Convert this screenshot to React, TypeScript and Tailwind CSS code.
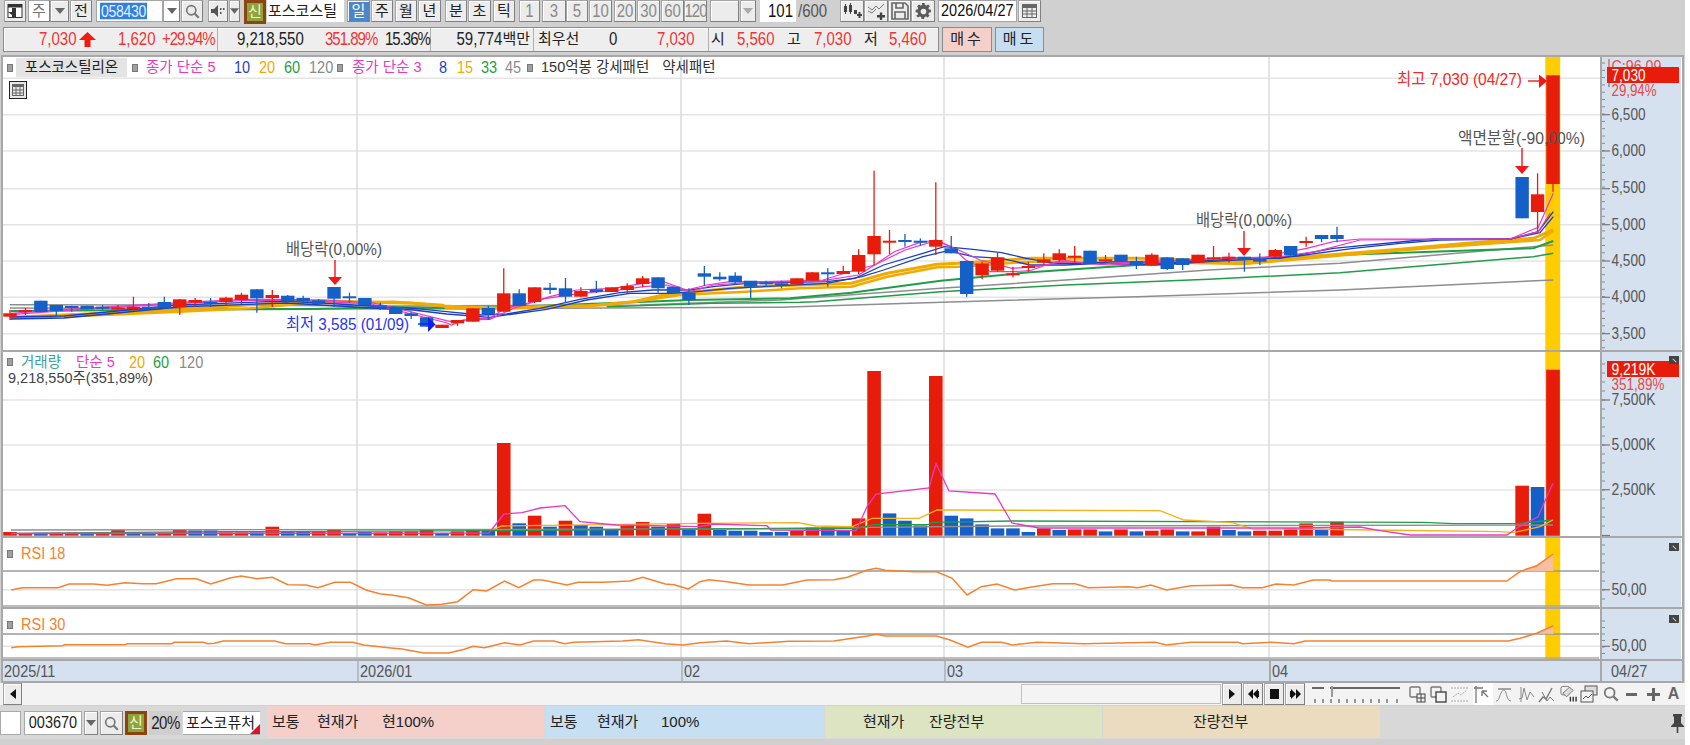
import React from "react";

type P = [number, number];
const F = (k: number, ox: number, oy: number, a: number[]): P[] => {
  const r: P[] = [];
  for (let i = 0; i < a.length; i += 2) r.push([ox + a[i] / k, oy + a[i + 1] / 3]);
  return r;
};
const z3 = (a: number[]) => F(3, 1300, 40, a);
const z4 = (a: number[]) => F(2.8, 0, 230, a);
const z5 = (a: number[]) => F(2.8, 780, 150, a);
const z12 = (a: number[]) => F(3, 380, 240, a);
const z8 = (a: number[]) => F(3, 1300, 340, a);
const z9 = (a: number[]) => F(2.24, 0, 490, a);
const z10 = (a: number[]) => F(2.24, 700, 490, a);
const pts = (p: P[]) => p.map(([x, y]) => `${x.toFixed(1)},${y.toFixed(1)}`).join(" ");

const RED = "#e81c0a";
const BLUE = "#1560c8";
const X = (i: number) => 10 + 15.43 * i;

const candles: [number, "R" | "B", number, number, number, number][] = [
  [0,"R",313.3,316.7,310,320],[1,"R",310,311.5,308,315],[2,"B",300.7,312,300.7,312],[3,"B",305,311,305,317],[4,"B",306,307.5,305.7,311.7],
  [5,"B",305.7,309.3,305.7,309.3],[6,"B",306.7,308,305,310],[7,"R",307.5,309,305,312],[8,"R",307,308.5,296.7,310.7],[9,"B",306.7,308,303,310],
  [10,"B",302,308,296.7,309],[11,"R",299.3,307.3,299,315],[12,"R",300,302.7,298,307],[13,"B",301.7,303.3,298,307],[14,"R",297.7,302,296.7,305],
  [15,"R",294.7,300,292.7,304],[16,"B",289.3,298.3,289,312.7],[17,"R",295,298,290,307],[18,"B",295.7,301.3,295,303],[19,"B",298,301.3,295.7,304],
  [20,"B",300.3,304,299,305.3],[21,"B",287,298.7,287,307],[22,"B",296.3,298.3,292.7,303],[23,"B",298,305,298,305],[24,"B",305.3,308,302.7,310],
  [25,"B",307,314,307,314],[26,"B",313.3,316,311.7,319],[27,"B",317.3,326.7,317.3,326.7],[28,"R",324.7,328,324.7,328],[29,"R",320,323.3,320,326],
  [30,"R",308.3,321.7,308.3,321.7],[31,"B",308,314,305.7,320],[32,"R",293.3,311.7,268.3,311.7],[33,"B",293.3,306,289.3,306],[34,"R",287.3,302,287.3,303],
  [35,"B",287.7,290,283,294],[36,"B",288.3,296.7,278,302.7],[37,"R",291,296.7,287.3,297.3],[38,"B",289.3,292,280.7,293],[39,"R",287.3,292,287.3,292],
  [40,"R",286,290,283.3,294],[41,"R",278.3,284,276,287.3],[42,"B",277.3,288.3,277.3,292.7],[43,"B",286.7,293.3,286.7,293.3],[44,"B",292.7,300,288.3,305],
  [45,"B",273.3,276.7,266,286],[46,"B",276.7,279.3,272.3,280.7],[47,"B",275.7,282.3,272.3,285],[48,"B",280.7,286.7,281,298],[49,"B",282.3,284,280.7,286.7],
  [50,"B",283.3,285,280.7,288.3],[51,"R",278.3,284.3,278.3,284.3],[52,"R",272.3,280.7,272.3,280.7],[53,"B",272.3,274.3,268.3,286.7],[54,"R",271,274,265.7,274],
  [55,"R",255,271.7,249.3,274],[56,"R",236,254.3,170.7,265],[57,"R",240.7,242.7,230,254],[58,"B",240,241.7,234,246.7],[59,"B",240.7,242.3,238.3,246],
  [60,"R",240,246.7,182.3,255],[61,"B",248.3,253.3,236,253.3],[62,"B",261,294,261,296.7],[63,"R",263.3,275.3,261.7,279.3],[64,"R",257.3,270.7,252.7,271.7],
  [65,"R",273.3,274.5,266.7,277.3],[66,"R",266,267.3,261.7,271.7],[67,"R",259.3,262.7,253.3,265],[68,"R",253.3,260,249.3,261.7],[69,"R",255.7,257,246,262.7],
  [70,"B",250.7,264,250.7,264],[71,"R",259.3,260.7,255,262.7],[72,"B",254.7,261.7,254.7,261.7],[73,"B",261,265,256.7,269],[74,"R",254.7,265,253.3,266],
  [75,"B",257.3,269,257.3,270],[76,"B",258.3,265,258.3,270],[77,"R",254.7,262.7,254.7,262.7],[78,"R",257.3,258.5,246,260],[79,"R",256.7,258,252.7,262.7],
  [80,"B",256.7,260,256.7,271.7],[81,"B",258.3,261.7,253.3,265],[82,"R",250,256.7,249,257],[83,"B",246,255,246,257.3],[84,"R",241,242.7,236.7,246.7],
  [85,"B",235,239,235,242.3],[86,"B",235,239,226.7,242.3],[98,"B",177,218.3,177,218.3],[99,"R",194.3,212,173.3,231.7],[100,"R",75.3,184,75.3,191.7],
];

const vols: [number, "R" | "B", number][] = ([
  ["R",3.7],["R",2],["B",3],["R",3],["R",3],["B",3],["R",3],["R",5.7],["B",3.3],["B",2.3],["R",3],["R",5.7],["B",5.3],["B",5.3],["R",3.3],["R",3.3],["B",3.3],["R",9],["B",4.7],["B",4.7],
  ["R",4.7],["R",6.3],["B",2.7],["B",3.7],["R",3.3],["R",4.3],["R",4.3],["R",6.7],["B",2.7],["R",4.3],["R",6.3],["B",4.7],["R",92.7],["B",12.4],["R",20],["B",9],["R",15],["B",10.7],["B",9],["B",6.3],
  ["R",9.7],["R",13.7],["B",9],["R",11.7],["B",5.7],["R",22],["B",5.7],["B",5],["B",5],["B",3.7],["B",3.7],["R",5],["R",8.3],["B",9],["B",5],["R",17.3],["R",164.7],["B",22.3],["B",15],["B",10.3],
  ["R",159.7],["B",20],["B",17.3],["B",11.3],["B",7.3],["B",7.3],["B",3.7],["R",7.3],["B",5.7],["R",6.3],["R",6.3],["B",4.3],["R",6.3],["B",4.3],["R",5],["R",6.3],["B",4.3],["R",4.3],["R",9],["B",5.7],
  ["B",4.3],["R",5],["R",5],["R",7.3],["R",12.3],["B",5.7],["R",14],
] as ["R" | "B", number][]).map((v, i) => [i, v[0], v[1]] as [number, "R" | "B", number]).concat([[98,"R",50],[99,"B",48.7],[100,"R",166]]);

const PINK = "#e53ac6";
const NAVY = "#1b3fc0";
const ORANGE = "#f0aa00";
const GREEN = "#1f9e48";
const GRAY = "#8e8e8e";

const maLines: { c: string; w: number; p: P[] }[] = [
  { c: GRAY, w: 1.5, p: [[10,304.7],[180,305],[400,306],[640,305],...z5([0,450,450,415,800,390,1200,360,1568,340]),...z3([700,620,760,615])] },
  { c: GRAY, w: 1.5, p: [[10,308],[400,309],[606,308],...z5([0,472,500,455,1000,440,1568,420]),...z3([760,720])] },
  { c: GREEN, w: 2, p: [...z4([30,243,700,238,870,237,1100,232,1300,235,1568,225]),...z12([680,190,930,180,1230,175]),...z5([200,428,450,392,700,367,1000,345,1200,337,1560,315]),...z3([700,625,760,603])] },
  { c: GREEN, w: 1.5, p: [...z12([680,200,1000,190,1260,187]),...z5([100,455,450,425,800,405,1200,388,1568,368]),...z3([700,650,760,640])] },
  { c: ORANGE, w: 3, p: [...z4([30,262,290,250,500,240,690,225,900,212,1100,218]),...z12([100,190,190,198,330,205,520,198,620,198,760,185,850,165,1000,150,1100,140,1260,135]),...z5([200,400,300,370,440,343,500,340,700,325,1000,325,1300,335]),...z3([150,640,300,628,500,610,700,595,760,570])] },
  { c: ORANGE, w: 2.5, p: [...z4([30,264,290,255,500,245,700,235,860,220,1100,215,1240,225]),...z12([200,205,400,205,680,195,800,180,900,165,1000,160,1100,155,1260,145]),...z5([200,410,300,380,440,352,500,350,700,335,1000,335,1300,342]),...z3([250,635,440,620,720,600,760,572])] },
  { c: NAVY, w: 1.3, p: [[10,317],[64,316],[107,312],[178,305],[286,301],[321,303],[371,306],...z12([100,205,200,215,300,225,380,222,480,205,600,178,720,158,820,150,930,150,1000,140,1100,130]),...z5([130,395,210,385,290,345,400,310,460,290,540,298,620,308,690,325,770,340,850,340,950,335,1050,340,1150,335,1300,325,1400,325]),...z3([100,625,330,603,400,597,630,597,715,575,760,515])] },
  { c: NAVY, w: 1.3, p: [[10,319],[64,318],[107,314],[178,307],[286,303],[321,305],[371,308],...z12([100,210,200,222,330,232,400,222,500,208,620,180,750,160,870,160,950,155,1050,145]),...z5([130,400,230,380,290,360,400,320,470,302,540,320,620,325,700,345,800,345,900,340,1050,345,1200,335,1320,328,1450,318]),...z3([160,625,300,610,420,600,630,597,720,578,760,530])] },
  { c: PINK, w: 1.2, p: [...z4([30,250,230,235,550,215,700,208,800,208,900,210,1040,218,1130,240,1250,272]),...z12([215,245,300,235,330,235,375,205,440,190,510,170,590,150,700,145,790,130,850,125,920,150,980,135,1050,125,1150,125]),...z5([120,390,210,360,265,345,320,305,390,278,437,270,480,290,520,330,590,365,650,365,700,362,745,345,790,330,860,340,920,345,1000,340,1100,335,1250,322,1350,325,1400,310,1475,295]),...z3([100,605,180,597,630,597,715,562,760,460])] },
  { c: PINK, w: 1.2, p: [...z4([30,254,230,238,550,218,700,211,800,211,900,214,1040,222,1130,246,1250,278]),...z12([215,255,250,240,330,238,400,205,500,175,600,160,720,150,790,140,860,135,930,155,1000,135,1100,128]),...z5([120,392,220,375,265,345,350,300,437,272,500,300,560,330,650,355,720,350,790,335,900,342,1000,335,1250,325,1400,320,1500,305]),...z3([180,600,630,597,715,575,750,520])] },
];

const rsi18: P[] = [
  ...z9([25,300,50,293,130,293,155,282,210,282,240,286,280,278,320,281,350,281,395,266,440,266,472,282,515,264,540,258,575,266,610,262,645,284,685,285,712,293,750,277,785,277,820,300,850,311,880,316,915,323,955,345,990,343,1025,335,1060,299,1090,303,1130,273,1162,293,1195,270,1215,270,1270,285,1295,277,1350,277,1410,273,1440,262,1490,282,1510,284,1542,297]),
  ...z10([0,275,20,269,60,275,110,285,185,285,240,270,300,269,330,262,375,240,395,235,415,241,480,245,530,245,565,265,598,315,630,290,665,282,705,300,740,292,790,281,840,281,870,293,960,290,980,293,1010,285,1045,300,1100,287,1190,285,1215,293,1260,293,1290,282,1330,285]),
  ...z8([40,720,90,720,95,723,620,723,660,695,680,687,710,677,760,642]),
];
const rsi30: P[] = [
  ...z9([25,473,40,470,140,467,145,464,280,464,285,461,385,461,390,457,455,457,465,461,480,460,500,453,615,453,640,461,695,461,705,465,740,457,790,457,815,465,870,473,900,477,950,489,1005,489,1040,478,1060,469,1085,473,1130,458,1165,465,1195,453,1240,453,1265,461,1285,457,1395,453,1430,449,1490,461,1530,465]),
  ...z10([0,458,60,453,110,461,200,454,300,453,375,438,395,433,415,438,530,438,560,450,600,472,630,457,675,457,700,465,755,457,860,461,1020,457,1045,465,1100,457,1205,457,1215,461,1280,457,1330,461]),
  ...z8([15,903,625,903,660,895,710,880,760,857]),
];

const volMA: { c: string; p: P[] }[] = [
  { c: GRAY, p: [[11,530],[700,529],[1012,526],[1553,525]] },
  { c: GREEN, p: [[13,533.3],[223,531.7],[491,530.7],[700,529],[856,528.5],[874,524.7],[928,524.7],[932,522.3],[1012,521],[1423,522.3],[1454,523.7],[1517,523.7],[1553,520]] },
  { c: "#f2b21c", p: [[491,530],[502,526],[700,523.3],[798,522.7],[816,526],[852,526.7],[872,518.3],[919,518.3],[937,510],[1160,510.7],[1184,520],[1231,522.3],[1254,529.3],[1300,529],[1373,530],[1500,531.7],[1513,532.7],[1540,526.7],[1553,520]] },
  { c: PINK, p: [[11,533.5],[489,533],[504,514],[522,512.7],[540,508],[565,505.7],[580,521.7],[616,525],[700,526.7],[713,524],[767,525.7],[771,530],[856,530.7],[867,506.7],[876,494],[929,488],[936,463.5],[949,491],[995,494],[1012,523],[1039,528],[1300,528],[1360,527],[1380,530.7],[1410,535],[1507,535],[1517,528],[1538,516.7],[1553,483]] },
];

const vGrid = [357, 681, 944, 1269];

const Backdrop = ({ top, h, lines }: { top: number; h: number; lines: number[] }) => (
  <>
    {lines.map((y) => <line key={y} x1={3} x2={1600} y1={y} y2={y} stroke="#e4e4e4" strokeWidth={1.6} />)}
    {vGrid.map((x) => <line key={x} x1={x} x2={x} y1={top} y2={top + h} stroke="#dcdcdc" strokeWidth={1.6} />)}
    <rect x={1545.3} y={top} width={14.9} height={h} fill="#ffcc00" />
  </>
);

const Arrow = ({ x, y1, y2, c }: { x: number; y1: number; y2: number; c: string }) => (
  <g>
    <line x1={x} x2={x} y1={y1} y2={y2} stroke={c} strokeWidth={1.4} />
    <polygon points={`${x - 7},${y2} ${x + 7},${y2} ${x},${y2 + 8}`} fill={c} />
  </g>
);

// chart label: taller glyphs pressed to the width the reference shows
const T = ({ x, y, w, c, fs = 16.5, children }: { x: number; y: number; w: number; c: string; fs?: number; children: React.ReactNode }) => (
  <text x={x} y={y} fontSize={fs} fill={c} textLength={w} lengthAdjust="spacingAndGlyphs">{children}</text>
);

const Sq = () => <span className="block w-[6px] h-[8px] bg-[#a0a0a0] border border-[#777]" />;

const CloseMark = ({ className }: { className: string }) => (
  <div className={`absolute left-[67px] w-[10px] h-[8px] bg-[#444] flex items-center justify-center ${className}`}>
    <span className="block w-[5px] h-[1px] bg-[#ddd] rotate-45" />
  </div>
);

const AxisTicks = ({ major, minor }: { major: number[]; minor: number[] }) => (
  <>
    {minor.map((y) => <line key={y} x1={1602} x2={1605} y1={y} y2={y} stroke="#8a8a8a" strokeWidth={1} />)}
    {major.map((y) => <line key={y} x1={1602} x2={1610} y1={y} y2={y} stroke="#777" strokeWidth={1.2} />)}
  </>
);

const Axis = ({ top, h, children }: { top: number; h: number; children: React.ReactNode }) => (
  <svg className="block absolute inset-0" width={79} height={h} viewBox={`1602 ${top} 79 ${h}`}>{children}</svg>
);

const range = (a: number, b: number, s: number) => {
  const r: number[] = [];
  for (let v = a; v < b; v += s) r.push(v);
  return r;
};

const ALabel = ({ y, w = 34, children, c = "#555" }: { y: number; w?: number; children: React.ReactNode; c?: string }) => (
  <T x={1611.5} y={y + 6} w={w} c={c} fs={17}>{children}</T>
);

const PriceChart = () => {
  const top = 57, h = 293;
  return (
    <svg className="block" width={1597} height={h} viewBox={`3 ${top} 1597 ${h}`}>
      <Backdrop top={top} h={h} lines={[78.3, 114.7, 151, 188.7, 224.7, 261, 297.3, 333.7]} />
      {maLines.map((l, i) => <polyline key={i} points={pts(l.p)} fill="none" stroke={l.c} strokeWidth={l.w} />)}
      {candles.map(([i, c, bt, bb, wt, wb]) => {
        const col = c === "R" ? RED : BLUE;
        return (
          <g key={i}>
            <line x1={X(i)} x2={X(i)} y1={wt} y2={wb} stroke={col} strokeWidth={1.3} />
            <rect x={X(i) - 6.7} y={bt} width={13.4} height={Math.max(bb - bt, 2)} fill={col} />
          </g>
        );
      })}
      <T x={286} y={255} w={96} c="#555">배당락(0,00%)</T>
      <Arrow x={335} y1={260} y2={277} c="#f01818" />
      <T x={286} y={330} w={123} c="#2a35f0">최저 3,585 (01/09)</T>
      <line x1={418} x2={428} y1={324} y2={324} stroke="#1020f0" strokeWidth={1.4} />
      <polygon points="428,317 435.5,324.5 428,332" fill="#1020f0" />
      <T x={1196} y={226} w={96} c="#555">배당락(0,00%)</T>
      <Arrow x={1244} y1={231} y2={248} c="#f01818" />
      <T x={1397} y={85} w={125} c="#f02a2a">최고 7,030 (04/27)</T>
      <line x1={1528} x2={1540} y1={81} y2={81} stroke="#f01818" strokeWidth={1.4} />
      <polygon points="1539,74.5 1547,81 1539,88" fill="#f01818" />
      <T x={1458} y={144} w={127} c="#555">액면분할(-90,00%)</T>
      <Arrow x={1522} y1={148} y2={166} c="#f01818" />
    </svg>
  );
};

const VolumeChart = () => {
  const top = 352, h = 184;
  return (
    <svg className="block" width={1597} height={h} viewBox={`3 ${top} 1597 ${h}`}>
      <Backdrop top={top} h={h} lines={[400, 445, 490]} />
      {vols.map(([i, c, v]) => <rect key={i} x={X(i) - 6.8} y={535.7 - v} width={13.6} height={v} fill={c === "R" ? RED : BLUE} />)}
      {volMA.map((l, i) => <polyline key={i} points={pts(l.p)} fill="none" stroke={l.c} strokeWidth={1.3} />)}
    </svg>
  );
};

const RsiChart = ({ top, h, hi, mid, line, fill }: { top: number; h: number; hi: number; mid: number; line: P[]; fill: P[] }) => (
  <svg className="block" width={1597} height={h} viewBox={`3 ${top} 1597 ${h}`}>
    <Backdrop top={top} h={h} lines={[mid]} />
    <line x1={3} x2={1599} y1={hi} y2={hi} stroke="#9a9a9a" strokeWidth={1.6} />
    <line x1={3} x2={1599} y1={top + h - 1} y2={top + h - 1} stroke="#a8a8a8" strokeWidth={1.4} />
    <polygon points={pts(fill)} fill="#f6bf9f" />
    <polyline points={pts(line)} fill="none" stroke="#f58230" strokeWidth={1.5} />
  </svg>
);

const Btn = ({ className = "", bg = "bg-[#ececec]", fg = "text-[#222]", h = "h-[22px]", children }: { className?: string; bg?: string; fg?: string; h?: string; children?: React.ReactNode }) => (
  <div className={`flex items-center justify-center shrink-0 border border-[#a4a4a4] border-b-[#808080] border-r-[#808080] shadow-[inset_1px_1px_0_#fff] text-[15px] overflow-hidden whitespace-nowrap ${h} ${bg} ${fg} ${className}`}>{children}</div>
);

const Down = ({ c = "#666" }: { c?: string }) => (
  <svg width="10" height="6" viewBox="0 0 10 6"><polygon points="0,0 10,0 5,6" fill={c} /></svg>
);

const Mag = ({ s = 18 }: { s?: number }) => (
  <svg width={s} height={s} viewBox="0 0 18 18" fill="none" stroke="#777" strokeWidth="2"><circle cx="7.5" cy="7.5" r="5.5" /><line x1="11.5" y1="11.5" x2="16.5" y2="16.5" strokeWidth="2.6" /></svg>
);

const Shin = ({ className = "" }: { className?: string }) => (
  <div className={`flex items-center justify-center shrink-0 w-[22px] h-[24px] border-[3px] border-[#8a4510] bg-[#8ea33c] text-[15px] text-[#eef5c8] ${className}`}>신</div>
);

const Num = ({ children }: { children: React.ReactNode }) => <span className="block scale-y-[1.18]">{children}</span>;

const GRAYFG = "text-[#8a8a8a]";

const TopBar = () => (
  <div className="flex h-[24px] pl-[4px] items-start shrink-0">
    <Btn className="w-[22px]">
      <svg width="16" height="14" viewBox="0 0 16 14"><rect x="1" y="0.5" width="14" height="13" fill="#fff" stroke="#333" /><rect x="1" y="0.5" width="14" height="3" fill="#333" /><rect x="5" y="4" width="4" height="9" fill="#333" /><polygon points="5,8 1,8 5,11" fill="#333" /></svg>
    </Btn>
    <Btn className="ml-[2px] w-[22px]" bg="bg-white" fg="text-[#777]">주</Btn>
    <Btn className="w-[19px]"><Down /></Btn>
    <Btn className="ml-[1px] w-[22px]">전</Btn>
    <div className="ml-[4px] w-[67px] h-[22px] shrink-0 bg-white border border-[#a4a4a4] flex items-center pl-[3px] text-[14px]">
      <span className="block scale-y-[1.18] bg-[#2f80e0] text-[#e6f2ff] px-[1px] leading-[14px] tracking-[-0.3px]">058430</span>
    </div>
    <Btn className="w-[17px]" bg="bg-white"><Down /></Btn>
    <Btn className="ml-[1px] w-[22px]"><Mag s={15} /></Btn>
    <Btn className="ml-[5px] w-[20px]">
      <svg width="14" height="14" viewBox="0 0 14 14" fill="#555"><polygon points="0,5 3,5 7,1 7,13 3,9 0,9" /><rect x="9" y="4" width="1.5" height="2" /><rect x="12" y="4" width="1.5" height="2" /><rect x="9" y="8" width="1.5" height="2" /></svg>
    </Btn>
    <Btn className="ml-[1px] w-[11px]"><Down /></Btn>
    <Shin className="ml-[4px]" />
    <div className="ml-[1px] w-[77px] h-[22px] shrink-0 bg-white flex items-center pl-[1px] text-[15px] text-[#222] overflow-hidden whitespace-nowrap">포스코스틸</div>
    <Btn className="ml-[3px] w-[23px]" bg="bg-[#4a86c8]" fg="text-white">일</Btn>
    <Btn className="ml-[1px] w-[22px]">주</Btn>
    <Btn className="ml-[2px] w-[22px]">월</Btn>
    <Btn className="ml-[1px] w-[23px]">년</Btn>
    <Btn className="ml-[4px] w-[22px]">분</Btn>
    <Btn className="ml-[1px] w-[23px]">초</Btn>
    <Btn className="ml-[2px] w-[22px]">틱</Btn>
    <Btn className="ml-[4px] w-[21px]" fg={GRAYFG}><Num>1</Num></Btn>
    <Btn className="ml-[2px] w-[24px]" fg={GRAYFG}><Num>3</Num></Btn>
    <Btn className="w-[22px]" fg={GRAYFG}><Num>5</Num></Btn>
    <Btn className="ml-[1px] w-[23px]" fg={GRAYFG}><Num>10</Num></Btn>
    <Btn className="ml-[2px] w-[22px]" fg={GRAYFG}><Num>20</Num></Btn>
    <Btn className="ml-[1px] w-[23px]" fg={GRAYFG}><Num>30</Num></Btn>
    <Btn className="ml-[1px] w-[23px]" fg={GRAYFG}><Num>60</Num></Btn>
    <Btn className="w-[23px] tracking-[-1px]" fg={GRAYFG}><Num>120</Num></Btn>
    <Btn className="ml-[3px] w-[29px]" />
    <Btn className="ml-[1px] w-[16px]"><Down c="#aaa" /></Btn>
    <div className="ml-[4px] w-[36px] h-[22px] shrink-0 bg-white flex items-center justify-end pr-[3px] text-[15px] text-[#111]"><Num>101</Num></div>
    <div className="ml-[2px] w-[30px] h-[22px] shrink-0 flex items-center text-[15px] text-[#555]"><Num>/600</Num></div>
    <Btn className="ml-[12px] w-[24px]">
      <svg width="19" height="17" viewBox="0 0 19 17" fill="#444"><rect x="1" y="3" width="3" height="6" /><line x1="2.5" y1="1" x2="2.5" y2="11" stroke="#444" /><rect x="6" y="2" width="3" height="7" /><line x1="7.5" y1="0" x2="7.5" y2="11" stroke="#444" /><rect x="11" y="7" width="3" height="4" fill="#444" /><path d="M14 11h5v2h-5zM15.5 9h2v6h-2z" /></svg>
    </Btn>
    <Btn className="w-[24px]">
      <svg width="19" height="17" viewBox="0 0 19 17" fill="none" stroke="#777"><path d="M1 4l4 3 4-4 3 3 5-5" /><path d="M1 8l4 2 4-4" /><path d="M10 12h8v2.4h-8zM12.8 9.5h2.4v8h-2.4z" fill="#444" stroke="none" /></svg>
    </Btn>
    <Btn className="w-[23px]">
      <svg width="18" height="18" viewBox="0 0 18 18" fill="none" stroke="#666" strokeWidth="1.6"><path d="M1 1h13l3 3v13H1z" /><path d="M5 1v5h7V1M4 17v-7h10v7" /></svg>
    </Btn>
    <Btn className="w-[24px]">
      <svg width="17" height="17" viewBox="0 0 24 24" fill="#5a5a5a"><path d="M10 1h4l.6 3 2.4 1 2.6-1.7 2.8 2.8L20 8.7l1 2.4 3 .6v4l-3 .3-1 2.5 1.7 2.6-2.8 2.8-2.6-1.8-2.4 1-.6 3h-4l-.6-3-2.4-1-2.6 1.8-2.8-2.8L4 18.5 3 16l-3-.3v-4l3-.6 1-2.4-1.7-2.6 2.8-2.8L7.7 5l2.4-1z" transform="scale(.9) translate(1 -1)" /><circle cx="12" cy="12" r="4" fill="#ececec" /></svg>
    </Btn>
    <div className="ml-[3px] w-[79px] h-[22px] shrink-0 bg-white border border-[#a4a4a4] flex items-center pl-[2px] text-[14.5px] text-[#111] overflow-hidden whitespace-nowrap"><Num>2026/04/27</Num></div>
    <Btn className="ml-[1px] w-[23px]">
      <svg width="15" height="14" viewBox="0 0 15 14" fill="none" stroke="#666"><rect x="0.5" y="0.5" width="14" height="13" /><rect x="0.5" y="0.5" width="14" height="3" fill="#666" /><path d="M5 4v9M10 4v9M1 7h13M1 10h13" /></svg>
    </Btn>
  </div>
);

const Red = ({ className = "", children }: { className?: string; children: React.ReactNode }) => (
  <span className={`block scale-y-[1.18] text-[#f03434] whitespace-nowrap ${className}`}>{children}</span>
);

const InfoBar = () => (
  <div className="flex h-[25px] mt-[3px] ml-[3px] shrink-0">
    <div className="flex w-[936px] border border-[#8c8c8c] bg-[#eeeeee] text-[15px] text-[#222] shadow-[inset_1px_1px_0_#fff]">
      <div className="flex items-center w-[214px] border-r border-[#b0b0b0] pl-[35px]">
        <Red className="w-[38px]">7,030</Red>
        <svg className="ml-[2px] shrink-0" width="17" height="15" viewBox="0 0 17 15"><polygon points="8.5,0 17,8 11.5,8 11.5,15 5.5,15 5.5,8 0,8" fill="#f01c10" /></svg>
        <Red className="ml-[22px] w-[37px]">1,620</Red>
        <Red className="ml-[7px] tracking-[-1px]">+29.94%</Red>
      </div>
      <div className="flex items-center w-[213px] border-r border-[#b0b0b0] pl-[19px]">
        <span className="block scale-y-[1.18] w-[67px]">9,218,550</span>
        <Red className="ml-[21px] w-[52px] tracking-[-1px]">351.89%</Red>
        <span className="block scale-y-[1.18] ml-[8px] tracking-[-1px] whitespace-nowrap">15.36%</span>
      </div>
      <div className="flex items-center justify-end w-[103px] border-r border-[#b0b0b0] pr-[3px] whitespace-nowrap"><Num>59,774</Num>백만</div>
      <div className="flex items-center w-[175px] border-r border-[#b0b0b0] pl-[4px]">
        <span className="w-[71px] whitespace-nowrap">최우선</span>
        <span className="block scale-y-[1.18] w-[48px]">0</span>
        <Red>7,030</Red>
      </div>
      <div className="flex items-center flex-1 pl-[2px]">
        <span className="w-[26px]">시</span>
        <Red className="w-[50px]">5,560</Red>
        <span className="w-[27px]">고</span>
        <Red className="w-[50px]">7,030</Red>
        <span className="w-[25px]">저</span>
        <Red>5,460</Red>
      </div>
    </div>
    <div className="ml-[3px] w-[50px] h-[25px] flex items-center justify-center border border-[#8c8c8c] bg-[#f5cfca] text-[15px] tracking-[3px] text-[#222]">매수</div>
    <div className="ml-[3px] w-[49px] h-[25px] flex items-center justify-center border border-[#8c8c8c] bg-[#c7def2] text-[15px] tracking-[3px] text-[#222]">매도</div>
  </div>
);

const Legend = () => (
  <div className="absolute left-[4px] top-[1px] flex items-center h-[19px] text-[14.5px] whitespace-nowrap">
    <Sq />
    <span className="ml-[3px] w-[111px] h-[19px] bg-[#e4e4e4] flex items-center justify-center text-[#222]">포스코스틸리온</span>
    <span className="ml-[5px]"><Sq /></span>
    <span className="ml-[8px] w-[78px] text-[#e53ac6]">종가 단순 5</span>
    <span className="ml-[10px] w-[14px] scale-y-[1.18] text-[#2342c8]">10</span>
    <span className="ml-[11px] w-[14px] scale-y-[1.18] text-[#f0aa00]">20</span>
    <span className="ml-[11px] w-[14px] scale-y-[1.18] text-[#1f9e48]">60</span>
    <span className="ml-[11px] w-[22px] scale-y-[1.18] text-[#8a8a8a]">120</span>
    <span className="ml-[6px]"><Sq /></span>
    <span className="ml-[9px] w-[77px] text-[#e53ac6]">종가 단순 3</span>
    <span className="ml-[10px] w-[8px] scale-y-[1.18] text-[#2342c8]">8</span>
    <span className="ml-[10px] w-[15px] scale-y-[1.18] text-[#f0aa00]">15</span>
    <span className="ml-[9px] w-[16px] scale-y-[1.18] text-[#1f9e48]">33</span>
    <span className="ml-[8px] w-[16px] scale-y-[1.18] text-[#8a8a8a]">45</span>
    <span className="ml-[6px]"><Sq /></span>
    <span className="ml-[8px] text-[#333]">150억봉 강세패턴</span>
    <span className="ml-[13px] text-[#333]">약세패턴</span>
  </div>
);

const GridIcon = () => (
  <div className="absolute left-[6px] top-[24px] w-[18px] h-[18px] border border-[#222] bg-[#e8e8e8] p-[2px]">
    <svg width="12" height="12" viewBox="0 0 12 12" fill="none" stroke="#666"><rect x="0.5" y="0.5" width="11" height="11" /><rect x="0.5" y="0.5" width="11" height="2" fill="#666" /><path d="M4 2v10M8 2v10M1 6h10M1 9h10" /></svg>
  </div>
);

const VolLegend = () => (
  <div className="absolute left-[4px] top-[2px] text-[14.5px] leading-[16px] whitespace-nowrap">
    <div className="flex items-center">
      <Sq />
      <span className="ml-[8px] w-[45px] text-[#3aa0a0]">거래량</span>
      <span className="ml-[10px] w-[42px] text-[#e53ac6]">단순 5</span>
      <span className="ml-[11px] w-[14px] scale-y-[1.18] text-[#f0aa00]">20</span>
      <span className="ml-[10px] w-[15px] scale-y-[1.18] text-[#1f9e48]">60</span>
      <span className="ml-[11px] scale-y-[1.18] text-[#8a8a8a]">120</span>
    </div>
    <div className="ml-[1px] text-[#444]">9,218,550주(351,89%)</div>
  </div>
);

const RsiLegend = ({ label, className }: { label: string; className: string }) => (
  <div className={`absolute left-[4px] flex items-center text-[14.5px] text-[#f58230] ${className}`}>
    <Sq />
    <span className="ml-[8px] scale-y-[1.18]">{label}</span>
  </div>
);

const Chart = () => (
  <div className="w-[1683px] mt-[3px] ml-[1px] border-2 border-[#a8a8a8] border-b-0 bg-white shrink-0">
    <div className="flex h-[293px]">
      <div className="relative w-[1597px]"><PriceChart /><Legend /><GridIcon /></div>
      <div className="relative w-[81px] border-l-2 border-[#a8a8a8] bg-[#d6e1ef] overflow-hidden">
        <Axis top={57} h={293}>
          <AxisTicks major={[114.7,151,188.7,224.7,261,297.3,333.7]} minor={range(63,350,7.3)} />
          <line x1={1609} x2={1609} y1={59} y2={68} stroke="#e03030" />
          <line x1={1609} x2={1609} y1={75} y2={87} stroke="#3060d0" />
          <T x={1611.5} y={72} w={50} c="#e05050" fs={17}>C:96,09</T>
          <rect x={1607} y={67} width={72} height={16} fill={RED} />
          <T x={1611.5} y={81} w={34} c="#fff" fs={17}>7,030</T>
          <T x={1611.5} y={96} w={45} c="#e84848" fs={17}>29,94%</T>
          <ALabel y={113.5}>6,500</ALabel>
          <ALabel y={150}>6,000</ALabel>
          <ALabel y={187}>5,500</ALabel>
          <ALabel y={223.5}>5,000</ALabel>
          <ALabel y={260}>4,500</ALabel>
          <ALabel y={296}>4,000</ALabel>
          <ALabel y={332.5}>3,500</ALabel>
        </Axis>
      </div>
    </div>
    <div className="flex h-[186px] border-t-2 border-[#a8a8a8]">
      <div className="relative w-[1597px]"><VolumeChart /><VolLegend /></div>
      <div className="relative w-[81px] border-l-2 border-[#a8a8a8] bg-[#d6e1ef] overflow-hidden">
        <Axis top={352} h={184}>
          <AxisTicks major={[400,445,489.7,535.5]} minor={range(364,535,9)} />
          <rect x={1607} y={361} width={72} height={16} fill={RED} />
          <T x={1611.5} y={375} w={44} c="#fff" fs={17}>9,219K</T>
          <T x={1611.5} y={390} w={53} c="#e84848" fs={17}>351,89%</T>
          <ALabel y={399} w={44}>7,500K</ALabel>
          <ALabel y={444} w={44}>5,000K</ALabel>
          <ALabel y={488.5} w={44}>2,500K</ALabel>
        </Axis>
        <CloseMark className="top-[4px]" />
      </div>
    </div>
    <div className="flex h-[71px] border-t-2 border-[#a8a8a8]">
      <div className="relative w-[1597px]">
        <RsiChart top={538} h={69} hi={571} mid={589.7} line={rsi18} fill={[...z8([660,695,680,687,710,677,760,642]),[1553.3,571],[1520,571]]} />
        <RsiLegend label="RSI 18" className="top-[5px]" />
      </div>
      <div className="relative w-[81px] border-l-2 border-[#a8a8a8] bg-[#d6e1ef] overflow-hidden">
        <Axis top={538} h={69}>
          <AxisTicks major={[589.7]} minor={range(545,607,9)} />
          <ALabel y={588.5} w={35}>50,00</ALabel>
        </Axis>
        <CloseMark className="top-[5px]" />
      </div>
    </div>
    <div className="flex h-[52px] border-t-2 border-[#a8a8a8]">
      <div className="relative w-[1597px]">
        <RsiChart top={609} h={50} hi={634} mid={646.3} line={rsi30} fill={[...z8([710,880,760,857]),[1553.3,634]]} />
        <RsiLegend label="RSI 30" className="top-[5px]" />
      </div>
      <div className="relative w-[81px] border-l-2 border-[#a8a8a8] bg-[#d6e1ef] overflow-hidden">
        <Axis top={609} h={50}>
          <AxisTicks major={[646.3]} minor={range(621,659,6.5)} />
          <ALabel y={645} w={35}>50,00</ALabel>
        </Axis>
        <CloseMark className="top-[6px]" />
      </div>
    </div>
    <div className="flex h-[24px] border-t-2 border-b-2 border-[#a8a8a8] bg-[#d6e1ef] text-[14.5px] text-[#555] leading-[20px]">
      <div className="w-[354px] pl-[1px]"><Num>2025/11</Num></div>
      <div className="w-[324px] border-l-2 border-[#b4bcc8] pl-[1px]"><Num>2026/01</Num></div>
      <div className="w-[263px] border-l-2 border-[#b4bcc8] pl-[1px]"><Num>02</Num></div>
      <div className="w-[325px] border-l-2 border-[#b4bcc8] pl-[1px]"><Num>03</Num></div>
      <div className="w-[331px] border-l-2 border-[#a8a8a8] pl-[1px]"><Num>04</Num></div>
      <div className="flex-1 border-l-2 border-[#a8a8a8] pl-[9px]"><Num>04/27</Num></div>
    </div>
  </div>
);

const I = ({ className = "", children }: { className?: string; children: React.ReactNode }) => (
  <div className={`flex items-center justify-center shrink-0 h-[20px] ${className}`}>{children}</div>
);

const ScrollBar = () => (
  <div className="flex h-[22px] pl-[3px] items-center shrink-0 bg-[#f3f3f3]">
    <Btn className="w-[19px]"><svg width="6" height="10" viewBox="0 0 6 10"><polygon points="6,0 6,10 0,5" fill="#111" /></svg></Btn>
    <div className="w-[999px] shrink-0" />
    <div className="w-[200px] h-[20px] shrink-0 bg-[#f4f4f4] border border-[#c0c0c0]" />
    <Btn className="ml-[1px] w-[20px]"><svg width="6" height="10" viewBox="0 0 6 10"><polygon points="0,0 0,10 6,5" fill="#111" /></svg></Btn>
    <Btn className="ml-[1px] w-[20px]"><svg width="11" height="10" viewBox="0 0 11 10" fill="#111"><polygon points="5,0 5,10 0,5" /><polygon points="10,0 10,10 5,5" /><rect x="10" y="2" width="1" height="6" /></svg></Btn>
    <Btn className="ml-[1px] w-[20px]"><span className="block w-[9px] h-[10px] bg-[#111]" /></Btn>
    <Btn className="ml-[1px] w-[20px]"><svg width="11" height="10" viewBox="0 0 11 10" fill="#111"><polygon points="1,0 1,10 6,5" /><polygon points="6,0 6,10 11,5" /><rect x="0" y="2" width="1" height="6" /></svg></Btn>
    <div className="ml-[7px] w-[88px] shrink-0">
      <svg className="block" width="88" height="20" viewBox="0 0 88 20" fill="none" stroke="#666">
        <path d="M0 4h12M18 4h70" strokeWidth="2" />
        <path d="M20 2v11" stroke="#999" strokeWidth="2" />
        <path d="M3 15v4M11 15v4M19 15v4M27 15v4M35 15v4M43 15v4M51 15v4M59 15v4M67 15v4M75 15v4M85 15v4" strokeWidth="1.3" />
      </svg>
    </div>
    <I className="ml-[9px] w-[17px]"><svg width="17" height="17" viewBox="0 0 17 17" fill="none" stroke="#777"><rect x="1" y="1" width="10" height="10" rx="1" strokeWidth="1.4" /><rect x="8" y="8" width="8" height="8" fill="#eee" stroke="#444" /><path d="M12 8v8M8 12h8" stroke="#444" /></svg></I>
    <I className="ml-[4px] w-[17px]"><svg width="17" height="17" viewBox="0 0 17 17" fill="none" stroke="#777" strokeWidth="1.4"><rect x="1" y="1" width="10" height="10" rx="1" /><rect x="6" y="6" width="10" height="10" fill="#f3f3f3" stroke="#444" /></svg></I>
    <I className="ml-[4px] w-[18px]"><svg width="18" height="17" viewBox="0 0 18 17" fill="none" stroke="#aaa" strokeDasharray="2 1"><path d="M0 2h18M0 15h18M2 11l5-4 3 2 6-5" /></svg></I>
    <div className="ml-[4px] w-[20px] h-[22px] bg-white flex items-center justify-center shrink-0"><svg width="18" height="17" viewBox="0 0 18 17" fill="none" stroke="#777"><path d="M2 0v17" strokeWidth="1.3" /><path d="M0 2h9" strokeWidth="1.5" /><path d="M8 5l6 6M8 5h5M8 5v5" stroke="#777" strokeWidth="1.4" /></svg></div>
    <I className="ml-[3px] w-[18px]"><svg width="18" height="17" viewBox="0 0 18 17" fill="none" stroke="#888"><path d="M0 15c3 0 3-4 5-8s4-4 5 0 2 8 5 8" /><path d="M2 3h13" strokeWidth="1.5" /></svg></I>
    <I className="ml-[4px] w-[17px]"><svg width="17" height="17" viewBox="0 0 17 17" fill="none" stroke="#888"><path d="M1 13l3-1 2-10 3 12 3-8 4 5" /><path d="M3 1v15" /></svg></I>
    <I className="ml-[3px] w-[17px]"><svg width="17" height="17" viewBox="0 0 17 17" fill="none" stroke="#777"><path d="M1 16l4-5 3 2 6-11" strokeWidth="1.4" /><path d="M4 6l5 9 3-4 4 4" /></svg></I>
    <I className="ml-[5px] w-[17px]"><svg width="18" height="18" viewBox="0 0 18 18" fill="none" stroke="#777"><rect x="1" y="1" width="9" height="9" rx="2" /><path d="M3 8l7-6 4 3-7 7z" fill="#ddd" /><path d="M11 12v5M14 12v5M17 12v5" stroke="#333" strokeWidth="1.5" /></svg></I>
    <I className="ml-[3px] w-[18px]"><svg width="18" height="18" viewBox="0 0 18 18" fill="none" stroke="#555"><rect x="5" y="1" width="12" height="9" fill="#ddd" /><rect x="1" y="6" width="12" height="11" fill="#f3f3f3" /><path d="M3 14l3-3 2 2 4-4" /></svg></I>
    <I className="ml-[5px] w-[16px]"><Mag s={16} /></I>
    <I className="ml-[7px] w-[11px]"><span className="block w-[11px] h-[3px] bg-[#666]" /></I>
    <I className="ml-[10px] w-[13px]"><svg width="13" height="13" viewBox="0 0 13 13" fill="#666"><rect y="5" width="13" height="3" /><rect x="5" width="3" height="13" /></svg></I>
    <I className="ml-[8px] w-[11px] text-[16px] font-bold text-[#666]">A</I>
  </div>
);

const BottomBar = () => (
  <div className="flex h-[33px] mt-[1px] shrink-0 bg-[#d8d8d8] text-[15px] text-[#222] whitespace-nowrap">
    <div className="w-[21px] h-[24px] mt-[5px] bg-white border border-[#aaa] shrink-0" />
    <div className="ml-[3px] w-[58px] h-[24px] mt-[5px] bg-white border border-[#aaa] flex items-center justify-center shrink-0 text-[14.5px]"><Num>003670</Num></div>
    <Btn className="ml-[2px] w-[14px] mt-[5px]" h="h-[24px]"><Down /></Btn>
    <Btn className="ml-[2px] w-[23px] mt-[5px]" h="h-[24px]"><Mag s={15} /></Btn>
    <Shin className="ml-[2px] mt-[5px]" />
    <div className="ml-[2px] w-[33px] h-[24px] mt-[5px] bg-[#cfcfcf] flex items-center justify-center shrink-0 tracking-[-0.5px]"><Num>20%</Num></div>
    <div className="relative ml-[1px] w-[77px] h-[24px] mt-[5px] bg-white border-y border-[#aaa] flex items-center pl-[3px] shrink-0 overflow-hidden">
      포스코퓨처
      <svg className="absolute right-0 bottom-0" width="10" height="10" viewBox="0 0 10 10"><polygon points="10,0 10,10 0,10" fill="#e01030" /></svg>
    </div>
    <div className="ml-[7px] w-[277px] h-[32px] bg-[#f5cfca] flex items-center pl-[5px] shrink-0">
      <span className="w-[45px]">보통</span><span className="w-[65px]">현재가</span><span>현100%</span>
    </div>
    <div className="ml-[2px] w-[278px] h-[32px] bg-[#c6dff2] flex items-center pl-[4px] shrink-0">
      <span className="w-[47px]">보통</span><span className="w-[64px]">현재가</span><span>100%</span>
    </div>
    <div className="ml-[1px] w-[277px] h-[32px] bg-[#dde4c2] flex items-center pl-[38px] shrink-0">
      <span className="w-[66px]">현재가</span><span>잔량전부</span>
    </div>
    <div className="ml-[1px] w-[277px] h-[32px] bg-[#ecdcbf] flex items-center pl-[90px] shrink-0">잔량전부</div>
    <div className="ml-[290px] mt-[8px] shrink-0">
      <svg width="15" height="19" viewBox="0 0 15 19" fill="#444"><path d="M3 0h9v2l-1 1v6l3 3v1H1v-1l3-3V3L3 2z" /><rect x="6.7" y="13" width="1.6" height="6" /></svg>
    </div>
  </div>
);

export default function App() {
  return (
    <div className="w-[1690px] h-[745px] overflow-hidden bg-white font-['Liberation_Sans','Noto_Sans_CJK_KR',sans-serif]">
      <div className="flex flex-col w-[1685px] h-[745px] bg-[#d0d0d0]">
        <TopBar />
        <InfoBar />
        <Chart />
        <ScrollBar />
        <BottomBar />
      </div>
    </div>
  );
}
